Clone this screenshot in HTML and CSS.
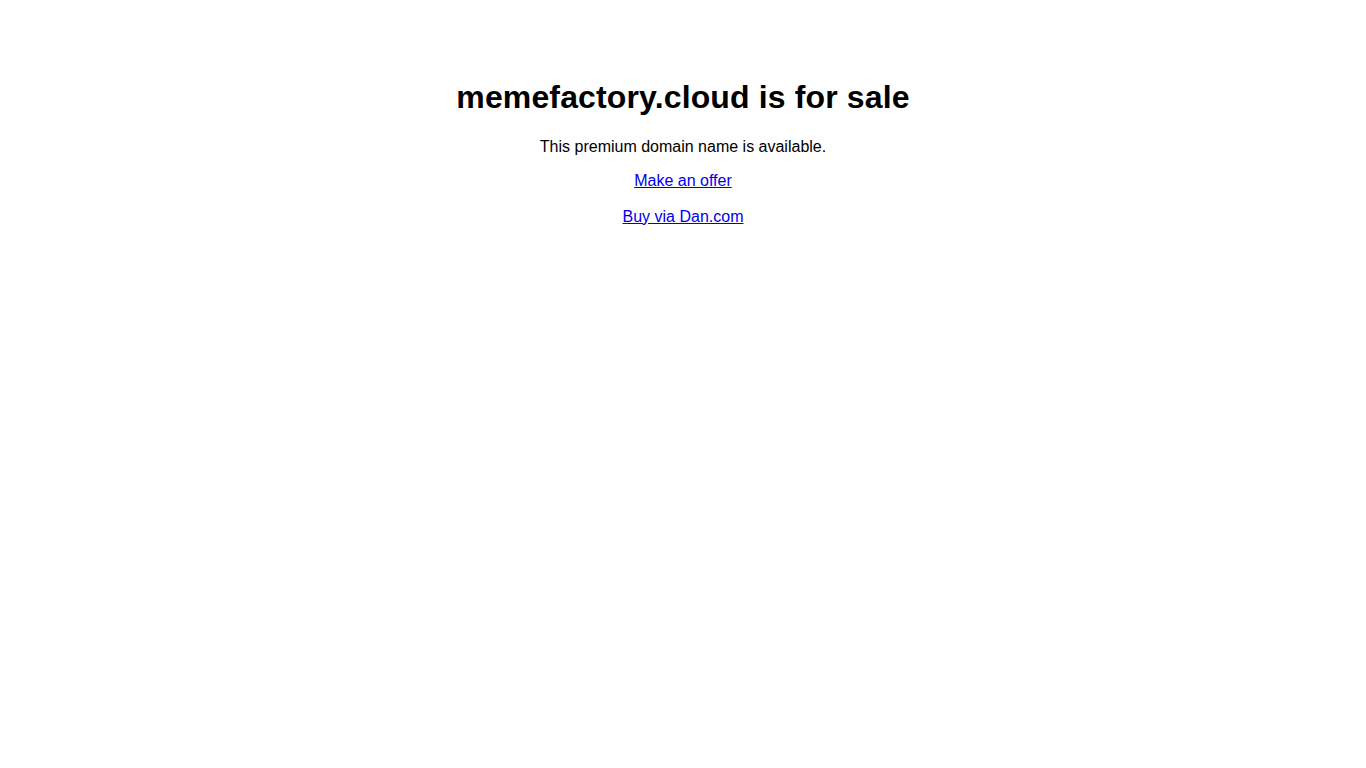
FILE: index.html
```html
<!DOCTYPE html>
<html lang="en">
<head>
<meta charset="utf-8">
<title>memefactory.cloud is for sale</title>
<link rel="stylesheet" href="styles.css">
</head>
<body>
<h1 class="title">memefactory.cloud is for sale</h1>
<p class="lead">This premium domain name is available.</p>
<p class="action"><a href="#">Make an offer</a></p>
<p class="action action-last"><a href="#">Buy via Dan.com</a></p>
</body>
</html>
```

FILE: styles.css
```css
body {
  margin: 8px;
  padding: 50px;
  font-family: "Liberation Sans", Arial, sans-serif;
  text-align: center;
  color: #000;
  background: #fff;
}
.title {
  font-size: 32px;
  font-weight: bold;
  letter-spacing: 0.14px;
  margin: 21.44px 0;
}
.lead, .action {
  font-size: 16px;
  margin: 16px 0;
}
.action-last {
  margin-top: 18px;
}
.action a {
  color: #0000ee;
  text-decoration: underline;
}
```
